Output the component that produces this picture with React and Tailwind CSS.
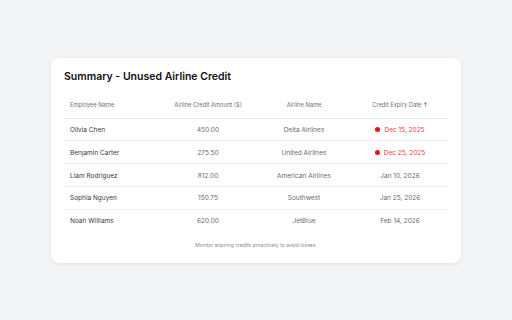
import React from 'react';

const rows = [
  { name: 'Olivia Chen', amount: '450.00', airline: 'Delta Airlines', date: 'Dec 15, 2025', urgent: true },
  { name: 'Benjamin Carter', amount: '275.50', airline: 'United Airlines', date: 'Dec 25, 2025', urgent: true },
  { name: 'Liam Rodriguez', amount: '812.00', airline: 'American Airlines', date: 'Jan 10, 2026', urgent: false },
  { name: 'Sophia Nguyen', amount: '150.75', airline: 'Southwest', date: 'Jan 25, 2026', urgent: false },
  { name: 'Noah Williams', amount: '620.00', airline: 'JetBlue', date: 'Feb 14, 2026', urgent: false },
];

const App = () => {
  return (
    <div className="w-[512px] h-[320px] bg-[#f3f4f6] flex items-start justify-center pt-[58px]" style={{ fontFamily: 'Inter, "Liberation Sans", sans-serif' }}>
      <div className="w-[410px] bg-white rounded-[8px] shadow-[0_1px_4px_rgba(0,0,0,0.08)] px-[13px] pt-[12px] pb-[14px]">
        <h1 className="text-[10.5px] font-semibold text-[#111111] leading-[14px]">Summary - Unused Airline Credit</h1>

        <table className="w-full mt-[6px] table-fixed border-collapse">
          <thead>
            <tr className="border-b border-[#e8e8ea]">
              <th className="text-left font-normal text-[5.75px] text-[#707075] pl-[6px] pt-[3px] h-[28px]">Employee Name</th>
              <th className="pt-[3px] text-center font-normal text-[5.75px] text-[#707075]">Airline Credit Amount ($)</th>
              <th className="pt-[3px] text-center font-normal text-[5.75px] text-[#707075]">Airline Name</th>
              <th className="pt-[3px] text-center font-normal text-[5.75px] text-[#707075]">
                Credit Expiry Date <span className="text-[#444]">↑</span>
              </th>
            </tr>
          </thead>
          <tbody>
            {rows.map((row, i) => (
              <tr key={row.name} className={i < rows.length - 1 ? 'border-b border-[#efeff1]' : ''}>
                <td className="pl-[6px] pt-[3px] h-[22.75px] text-[6.5px] text-[#3a3a3a]">{row.name}</td>
                <td className="pt-[3px] text-center text-[6.5px] text-[#6a6a6a]">{row.amount}</td>
                <td className="pt-[3px] text-center text-[6.5px] text-[#6a6a6a]">{row.airline}</td>
                <td className={`pt-[3px] text-center text-[6.5px] ${row.urgent ? 'text-[#ef3b3b]' : 'text-[#6a6a6a]'}`}>
                  {row.urgent && <span className="inline-block w-[5px] h-[5px] rounded-full bg-[#ee1111] mr-[4px] align-[0px]" />}
                  {row.date}
                </td>
              </tr>
            ))}
          </tbody>
        </table>

        <p className="text-center text-[5px] leading-[7px] text-[#8a8a8f] mt-[10px]">Monitor expiring credits proactively to avoid losses.</p>
      </div>
    </div>
  );
};

export default App;
